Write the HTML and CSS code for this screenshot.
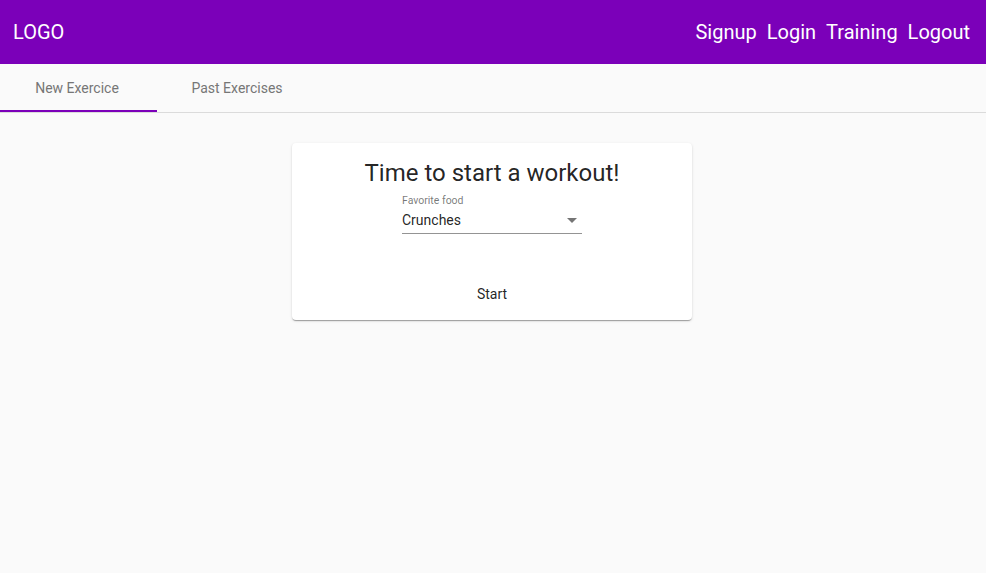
FILE: index.html
```html
<!DOCTYPE html>
<html>
<head>
<meta charset="utf-8">
<link rel="stylesheet" href="styles.css">
</head>
<body>
<header class="toolbar">
  <div class="logo">LOGO</div>
  <nav class="nav">
    <a href="#">Signup</a>
    <a href="#">Login</a>
    <a href="#">Training</a>
    <a href="#">Logout</a>
  </nav>
</header>
<div class="tabs">
  <div class="tab tab-active">New Exercice</div>
  <div class="tab">Past Exercises</div>
</div>
<main class="content">
  <section class="card">
    <h1 class="card-title">Time to start a workout!</h1>
    <div class="field">
      <div class="field-label">Favorite food</div>
      <div class="select">
        <span class="select-value">Crunches</span>
        <span class="select-arrow"></span>
      </div>
    </div>
    <div class="actions">
      <button class="btn">Start</button>
    </div>
  </section>
</main>
</body>
</html>
```
FILE: styles.css
```css
html, body {
  margin: 0;
  padding: 0;
}
body {
  background: #fafafa;
  font-family: Roboto, "Helvetica Neue", sans-serif;
  color: rgba(0, 0, 0, 0.87);
  height: 573px;
}
.toolbar {
  height: 64px;
  background: #7b00b9;
  color: #fff;
  display: flex;
  align-items: center;
  justify-content: space-between;
  padding: 0 16px 0 13px;
  font-size: 20px;
}
.logo {
  font-size: 20px;
}
.nav {
  display: flex;
  gap: 10px;
}
.nav a {
  color: #fff;
  text-decoration: none;
  font-size: 20px;
}
.tabs {
  display: flex;
  height: 48px;
  border-bottom: 1px solid rgba(0, 0, 0, 0.12);
}
.tab {
  width: 157px;
  box-sizing: border-box;
  display: flex;
  align-items: center;
  justify-content: center;
  font-size: 14px;
  color: #767676;
  border-bottom: 2px solid transparent;
  padding-top: 2px;
}
.tab-active {
  border-bottom-color: #7b00b9;
  padding-right: 3px;
}
.tab + .tab {
  width: 160px;
}
.content {
  display: flex;
  justify-content: center;
  padding-top: 30px;
  padding-right: 2px;
}
.card {
  width: 400px;
  box-sizing: border-box;
  background: #fff;
  border-radius: 4px;
  padding: 16px 16px 8px;
  box-shadow: 0 2px 1px -1px rgba(0,0,0,.2), 0 1px 1px 0 rgba(0,0,0,.14), 0 1px 3px 0 rgba(0,0,0,.12);
  display: flex;
  flex-direction: column;
  align-items: center;
}
.card-title {
  margin: 0;
  font-size: 24px;
  font-weight: 400;
  line-height: 28px;
  color: rgba(0, 0, 0, 0.87);
}
.field {
  width: 180px;
  margin-top: 8px;
}
.field-label {
  font-size: 10.5px;
  line-height: 12px;
  color: rgba(0, 0, 0, 0.54);
}
.select {
  margin-top: 5px;
  display: flex;
  align-items: center;
  justify-content: space-between;
  border-bottom: 1px solid rgba(0, 0, 0, 0.42);
  padding-bottom: 5px;
}
.select-value {
  font-size: 14px;
  line-height: 16px;
}
.select-arrow {
  width: 0;
  height: 0;
  border-left: 5px solid transparent;
  border-right: 5px solid transparent;
  border-top: 5px solid rgba(0, 0, 0, 0.54);
  margin-right: 5px;
  margin-top: 1px;
}
.actions {
  margin-top: 42px;
  display: flex;
  justify-content: center;
}
.btn {
  height: 36px;
  padding: 0 16px;
  border: none;
  background: transparent;
  font-family: Roboto, sans-serif;
  font-size: 14px;
  font-weight: 400;
  color: rgba(0, 0, 0, 0.87);
  border-radius: 4px;
  cursor: pointer;
}
```
